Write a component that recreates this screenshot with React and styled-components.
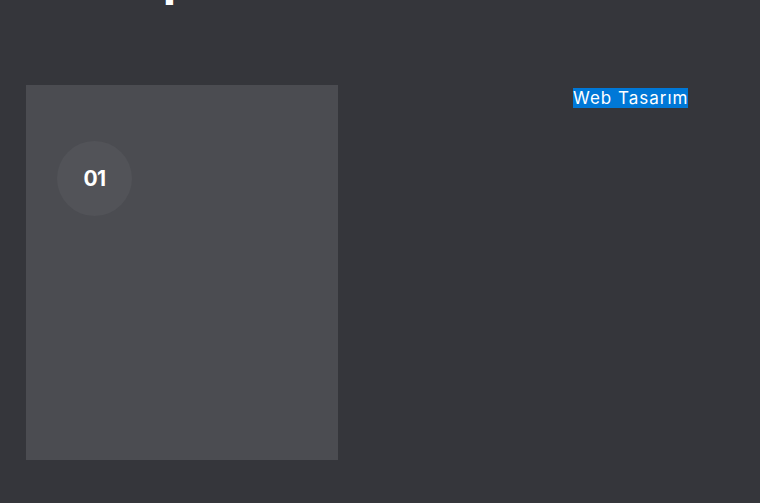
import React from "react";
import styled, { createGlobalStyle } from "styled-components";

const Global = createGlobalStyle`
  html, body { margin: 0; padding: 0; background: #35363b; }
  body { font-family: "Inter", "Noto Sans", sans-serif; color: #fff; }
`;

const Page = styled.div`
  width: 760px;
  height: 503px;
  background: #35363b;
  overflow: hidden;
  display: flex;
  flex-direction: column;
`;

const HeadingClip = styled.div`
  height: 5px;
  overflow: hidden;
  display: flex;
  align-items: flex-end;
  padding-left: ${(p) => p.$indent}px;
`;

const Heading = styled.h2`
  margin: 0;
  font-family: "Inter", sans-serif;
  font-weight: 800;
  font-size: 42px;
  line-height: 1;
  white-space: nowrap;
  color: #fff;
  transform: translateY(${(p) => p.$shift}px);
`;

const Row = styled.div`
  display: flex;
  padding: 80px 0 0 26px;
`;

const Card = styled.div`
  width: 312px;
  height: 375px;
  background: #4b4c51;
  padding: 56px 0 0 31px;
  box-sizing: border-box;
`;

const Badge = styled.div`
  width: 75px;
  height: 75px;
  border-radius: 50%;
  background: #525358;
  display: flex;
  align-items: center;
  justify-content: center;
  font-family: "Inter", sans-serif;
  font-weight: 700;
  font-size: 21px;
  letter-spacing: -0.5px;
  color: #fff;
`;

const Side = styled.div`
  padding: 3px 0 0 235px;
`;

const Label = styled.span`
  display: inline-block;
  background: #0078d7;
  color: #fff;
  font-family: "Inter", sans-serif;
  font-size: 17px;
  letter-spacing: 1px;
  line-height: 20px;
  height: 20px;
  padding: 0;
`;

export default function App() {
  return (
    <>
      <Global />
      <Page>
        <HeadingClip $indent={112}>
          <Heading $shift={1}>Yap</Heading>
        </HeadingClip>
        <Row>
          <Card>
            <Badge>01</Badge>
          </Card>
          <Side>
            <Label>Web Tasarım</Label>
          </Side>
        </Row>
      </Page>
    </>
  );
}
